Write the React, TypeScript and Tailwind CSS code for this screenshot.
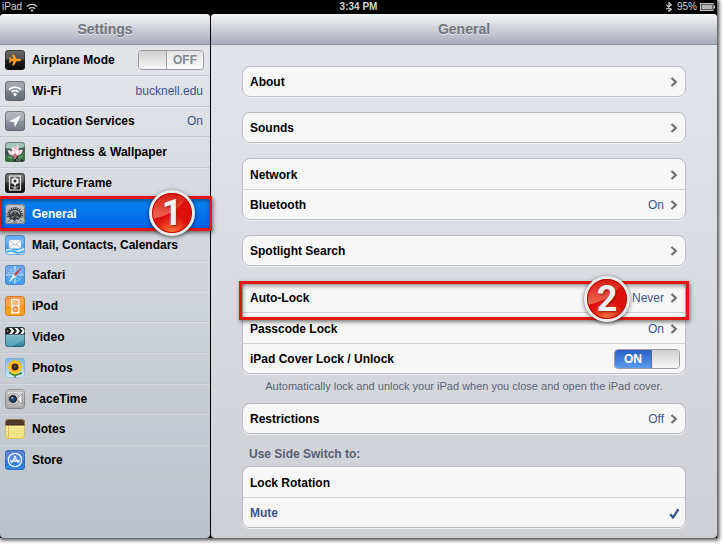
import React, { useState } from 'react';

/* ---------- sidebar icons, all on a 20 x 20 grid ---------- */

const Tile: React.FC<{ id: string; from: string; to: string; edge?: string; gloss?: boolean; children?: React.ReactNode }> = ({
  id, from, to, edge = '#555', gloss = true, children,
}) => (
  <svg viewBox="0 0 20 20" className="w-5 h-5 shrink-0" aria-hidden="true">
    <defs>
      <linearGradient id={`${id}-bg`} x1="0" y1="0" x2="0" y2="1">
        <stop offset="0" stopColor={from} />
        <stop offset="1" stopColor={to} />
      </linearGradient>
      <clipPath id={`${id}-clip`}>
        <rect width="20" height="20" rx="3.5" />
      </clipPath>
    </defs>
    <g clipPath={`url(#${id}-clip)`}>
      <rect width="20" height="20" fill={`url(#${id}-bg)`} />
      {gloss && <path d="M0 0h20v9q-10 3-20 0z" fill="#fff" opacity=".2" />}
      {children}
    </g>
    <rect x=".5" y=".5" width="19" height="19" rx="3" fill="none" stroke={edge} strokeOpacity=".6" />
  </svg>
);

const icons = {
  airplane: (
    <Tile id="air" from="#444" to="#050505" edge="#222">
      <path d="M16 10c0-.8-1-1.300-2.500-1.300h-1.900L8.800 4.500H7.100l1.300 4.200H6.500L5.200 7.200H4L4.600 10 4 12.800h1.200l1.300-1.500h1.900l-1.300 4.200h1.700l2.800-4.200h1.900C15 11.300 16 10.800 16 10z" fill="#ff9d23" />
    </Tile>
  ),
  wifi: (
    <Tile id="wifi" from="#8f959e" to="#646a74">
      <g fill="none" stroke="#fff" strokeWidth="1.8">
        <path d="M4 8.600a8.600 8.600 0 0 1 12 0" />
        <path d="M6.500 11.200a5 5 0 0 1 7 0" />
      </g>
      <path d="M10 15.600l-2.100-2.500a3 3 0 0 1 4.200 0z" fill="#fff" />
    </Tile>
  ),
  location: (
    <Tile id="loc" from="#a3a8b3" to="#747986">
      <path d="M15.800 4.200L4 10.600l5.200.5.7 5.200z" fill="#fff" />
    </Tile>
  ),
  wallpaper: (
    <Tile id="wall" from="#4f7f77" to="#1c2a26" gloss={false}>
      <path d="M0 0h20v5q-10 3-20 1z" fill="#a3c4b9" />
      <path d="M0 12l6 1 4 3-2 4H0zM20 9l-6 3-1 5 7 1z" fill="#397540" />
      <path d="M10 14C5 14 3 11 2.500 8c3 0 4 1 4.500 2C6 7 7 5 8 4c1 1 1.500 2 2 3 .4-2 1.500-3.500 3-4.500 1 2 1 4 .3 6.500C14 8 15.500 7.500 18 8c-1 4-4 6-8 6z" fill="#f6d3dd" />
      <path d="M10 14c-2-1-3-3-3-5 2 1 2.600 2 3 3 .4-2 1.200-3 3-4 .4 3-1 5-3 6z" fill="#fff" />
      <path d="M8 13l2-2 2 2-1 4H9z" fill="#d8607e" />
      <path d="M3 15l4 1M13 16l5-2M11 18l5 0" stroke="#a8c39c" strokeWidth=".8" />
    </Tile>
  ),
  frame: (
    <Tile id="frame" from="#555" to="#0c0c0c" edge="#222">
      <rect x="4.500" y="3" width="11" height="14" fill="none" stroke="#e8e8e8" strokeWidth="1.200" />
      <g fill="#f0f0f0">
        <circle cx="10" cy="5.700" r="1.500" /><circle cx="12.100" cy="6.900" r="1.500" />
        <circle cx="12.100" cy="9.300" r="1.500" /><circle cx="10" cy="10.500" r="1.500" />
        <circle cx="7.900" cy="9.300" r="1.500" /><circle cx="7.900" cy="6.900" r="1.500" />
      </g>
      <circle cx="10" cy="8.100" r="1.500" fill="#333" />
      <path d="M10 11.500v4M10 15c-2 0-3-.8-3.200-2M10 15c2 0 3-.8 3.200-2" fill="none" stroke="#eee" />
    </Tile>
  ),
  general: (
    <Tile id="gen" from="#b4b6b9" to="#85878a">
      <circle cx="10" cy="11" r="7" fill="none" stroke="#323437" strokeWidth="1.600" strokeDasharray="1.200 1" />
      <circle cx="10" cy="11" r="6.200" fill="#36383b" />
      <path d="M5.500 10.500a4.600 4.600 0 0 1 9 0" fill="none" stroke="#a0a2a5" strokeWidth="1.500" />
      <path d="M10 11V7.500M10 11.500l4 2.500M10 11.500L6 14" stroke="#8d8f92" strokeWidth="1.200" />
      <circle cx="10" cy="11.300" r="1.900" fill="#4b4d50" />
      <path d="M0 14l3.500-.5 2 2.500 2-1 2 2.500 2-2.500 2 1 2-2.500 4.500.5v6H0z" fill="#b4b6b9" />
      <path d="M3 17.500l2-1.500M17 17.500L15 16M8 18h4" stroke="#606265" />
    </Tile>
  ),
  mail: (
    <Tile id="mail" from="#4b9df0" to="#3aa6ef" edge="#3b7cc4">
      <path d="M0 15q4-2 8 0t12-3v8H0z" fill="#d5effc" />
      <path d="M1 17q5-2 9 0t9-1" stroke="#39a4e8" fill="none" strokeWidth="1.500" />
      <rect x="4" y="5" width="12" height="8.500" rx=".8" fill="#fff" stroke="#9fb3c8" strokeWidth=".4" />
      <path d="M4.500 5.500L10 10l5.500-4.500M4.500 13l4-4M15.500 13l-4-4" fill="none" stroke="#8499b0" strokeWidth=".7" />
    </Tile>
  ),
  safari: (
    <Tile id="saf" from="#4c8fe8" to="#45a4ee" edge="#3a76be">
      <circle cx="10" cy="10" r="6.500" fill="none" stroke="#cce5ff" strokeWidth="1" strokeDasharray="1 1" />
      <path d="M10 1v18M1 10h18" stroke="#dcefff" strokeWidth="1.200" strokeDasharray="2 .6" />
      <path d="M5 5l10 10" stroke="#a9d2fb" strokeWidth=".8" />
      <path d="M17 2.500l-8.200 6.300 2.200 2.200z" fill="#c44940" />
      <path d="M3.500 17.500l5.300-8.700L11 11z" fill="#f6f6f6" />
      <circle cx="10" cy="10" r=".8" fill="#555" />
    </Tile>
  ),
  ipod: (
    <Tile id="ipod" from="#f4801f" to="#fba81c" edge="#b9691c">
      <rect x="6" y="3" width="8.500" height="14.500" rx=".8" fill="#fff3e6" />
      <rect x="7.300" y="4.300" width="5.900" height="4.700" fill="#f9b67a" />
      <circle cx="10.250" cy="13.200" r="2.100" fill="none" stroke="#f4831f" strokeWidth="1.600" />
    </Tile>
  ),
  video: (
    <Tile id="vid" from="#c8e4ec" to="#257f9d" edge="#2c4c57" gloss={false}>
      <path d="M0 20V12L20 7v5L6 20z" fill="#6fb4c8" opacity=".6" />
      <rect width="20" height="7.500" fill="#1a1a1a" />
      <path d="M4 1h3l2.500 3L7 7H4l2.500-3zM9.500 1h3L15 4l-2.500 3h-3L12 4zM15 1h3l2.500 3L18 7h-3l2.500-3z" fill="#f4f4f4" />
      <circle cx="2.600" cy="4" r="1" fill="#888" />
    </Tile>
  ),
  photos: (
    <Tile id="pho" from="#7ab4ec" to="#d6ecfa" edge="#7fa6c9" gloss={false}>
      <path d="M10 11v9M10 17c-3 0-4-2-6-2.500M10 17c3 0 4-2 7-1.500" fill="none" stroke="#3c8428" strokeWidth="1.700" />
      <g fill="#fbc317">
        {[0, 30, 60, 90, 120, 150].map((a) => (
          <ellipse key={a} cx="10" cy="9" rx="2" ry="7.800" transform={`rotate(${a} 10 9)`} />
        ))}
      </g>
      <circle cx="10" cy="9" r="4" fill="#e5860f" />
      <circle cx="10" cy="9" r="3.200" fill="#39220f" />
      <circle cx="10" cy="8.500" r="1.300" fill="#6b5138" />
    </Tile>
  ),
  facetime: (
    <Tile id="face" from="#d6d6d6" to="#b4b4b4" edge="#666">
      <rect x="2" y="2" width="16" height="16" rx="2" fill="none" stroke="#8a8a8a" strokeWidth=".6" />
      <rect x="3.500" y="5" width="9.500" height="10" rx="2" fill="#e9e9e9" stroke="#777" strokeWidth=".6" />
      <path d="M17 5v10l-4-4V9z" fill="#f8f8f8" stroke="#777" strokeWidth=".6" />
      <circle cx="8" cy="10" r="4" fill="#24282f" />
      <circle cx="8" cy="10" r="2.600" fill="#1c4674" />
      <circle cx="7.200" cy="9" r="1.100" fill="#8cc2ee" />
    </Tile>
  ),
  notes: (
    <Tile id="note" from="#fbf3a0" to="#f7e87a" edge="#b5a558" gloss={false}>
      <path d="M0 9.500h20M0 12h20M0 14.500h20M0 17h20" stroke="#d9cf85" strokeWidth=".6" />
      <path d="M3.500 6v14" stroke="#d99f62" strokeWidth=".6" />
      <rect width="20" height="6" fill="#553a31" />
      <path d="M0 6h20" stroke="#362017" />
    </Tile>
  ),
  store: (
    <Tile id="store" from="#2c5cc8" to="#2f8be8" edge="#2f5fae">
      <circle cx="10" cy="10" r="6.700" fill="none" stroke="#f2f8ff" strokeWidth="1.300" />
      <g stroke="#f2f8ff" strokeWidth="1.300" strokeLinecap="round">
        <path d="M10.600 6.500L6.700 12.700M9.400 6.500l3.900 6.200M5.300 11h9.400" />
      </g>
    </Tile>
  ),
};

type IconName = keyof typeof icons;

const menu: { icon: IconName; label: string; value?: string }[] = [
  { icon: 'airplane', label: 'Airplane Mode' },
  { icon: 'wifi', label: 'Wi-Fi', value: 'bucknell.edu' },
  { icon: 'location', label: 'Location Services', value: 'On' },
  { icon: 'wallpaper', label: 'Brightness & Wallpaper' },
  { icon: 'frame', label: 'Picture Frame' },
  { icon: 'general', label: 'General' },
  { icon: 'mail', label: 'Mail, Contacts, Calendars' },
  { icon: 'safari', label: 'Safari' },
  { icon: 'ipod', label: 'iPod' },
  { icon: 'video', label: 'Video' },
  { icon: 'photos', label: 'Photos' },
  { icon: 'facetime', label: 'FaceTime' },
  { icon: 'notes', label: 'Notes' },
  { icon: 'store', label: 'Store' },
];

/* ---------- small parts ---------- */

const Chevron = () => (
  <svg viewBox="0 0 8 10" className="w-2 h-[10px] shrink-0" aria-hidden="true">
    <path d="M1.500 1L5.800 5 1.500 9" fill="none" stroke="#6f6f6f" strokeWidth="2.200" />
  </svg>
);

const Toggle: React.FC<{ id: string; on: boolean; onChange: (v: boolean) => void }> = ({ id, on, onChange }) => (
  <span className="relative flex w-[66px] h-5 rounded-sm border border-[#9a9b9e] overflow-hidden text-xs leading-[18px] text-center">
    <input
      id={id}
      type="checkbox"
      role="switch"
      checked={on}
      onChange={(e) => onChange(e.target.checked)}
      className="absolute inset-0 w-full h-full opacity-0 cursor-pointer"
    />
    {on && <span className="flex-1 bg-gradient-to-b from-[#2a5fc4] to-[#5b9bf0] font-bold text-white">ON</span>}
    <span className={`w-7 bg-gradient-to-b from-[#cfcfcf] to-[#f8f8f8] ${on ? 'border-l border-[#4a6ba8]' : 'border-r border-[#a2a2a2]'}`}></span>
    {!on && <span className="flex-1 bg-gradient-to-b from-[#e4e4e4] to-[#fbfbfb] font-bold text-[#85878b]">OFF</span>}
  </span>
);

const Card: React.FC<{ children: React.ReactNode }> = ({ children }) => (
  <div className="rounded-lg border border-[#b9bbc2] bg-[#f7f7f7] shadow-[0_1px_0_#f0f1f4] divide-y divide-[#cfd0d3]">
    {children}
  </div>
);

const LinkRow: React.FC<{ label: string; value?: string; children?: React.ReactNode }> = ({ label, value, children }) => (
  <a href="#" className="relative flex items-center h-[31px] last:h-[29px] pt-px px-[7px]">
    <span className="flex-1 font-bold text-black">{label}</span>
    {value && <span className="mr-[6px] text-[#3c5587]">{value}</span>}
    <Chevron />
    {children}
  </a>
);

// numbered red ball of a callout
const Ball: React.FC<{ n: number }> = ({ n }) => (
  <span className="relative flex shrink-0 items-center justify-center w-[46px] h-[46px] rounded-full border-[3px] border-[#ececec] bg-[#dc0f0c] overflow-hidden shadow-[0_1px_4px_rgba(0,0,0,0.6)]">
    <svg viewBox="0 0 40 40" className="absolute inset-0 w-full h-full" aria-hidden="true">
      <defs>
        <linearGradient id={`ball${n}`} x1="0" y1="0" x2="0" y2="1">
          <stop offset="0" stopColor="#d8190f" />
          <stop offset="1" stopColor="#ee6a57" />
        </linearGradient>
        <radialGradient id={`glow${n}`} cx=".5" cy="1" r=".45">
          <stop offset="0" stopColor="#ff7a3c" />
          <stop offset="1" stopColor="#ff7a3c" stopOpacity="0" />
        </radialGradient>
      </defs>
      <path d="M0 0h36C32 13 20 22 0 26z" fill={`url(#ball${n})`} />
      <circle cx="20" cy="20" r="20" fill={`url(#glow${n})`} />
      <circle cx="20" cy="20" r="19.500" fill="none" stroke="#b80b08" />
    </svg>
    <span className="relative font-[Roboto,sans-serif] text-4xl leading-none font-bold text-[#f0f0f0] [text-shadow:1px_1px_2px_rgba(80,0,0,0.6)]">{n}</span>
  </span>
);

const Title: React.FC<{ children: React.ReactNode }> = ({ children }) => (
  <h1 className="h-[31px] shrink-0 rounded-t border-b border-[#8b8f9d] bg-gradient-to-b from-[#f5f6f8] to-[#a9acba] text-center text-sm leading-[30px] font-bold text-[#71757e] [text-shadow:0_1px_0_rgba(255,255,255,0.5)]">
    {children}
  </h1>
);

const StatusBar = () => (
  <div className="grid grid-cols-3 items-center h-[14px] shrink-0 px-[2px] text-[10px] leading-[14px] text-[#d4d4d4]">
    <div className="flex items-center gap-1">
      <span>iPad</span>
      <svg viewBox="0 0 12 9" className="w-3 h-[9px]" aria-hidden="true">
        <g fill="none" stroke="#c9c9c9" strokeWidth="1.300">
          <path d="M.8 3.600a7.300 7.300 0 0 1 10.400 0" />
          <path d="M3 5.800a4.200 4.200 0 0 1 6 0" />
        </g>
        <path d="M6 9L4.400 7.300a2.200 2.200 0 0 1 3.200 0z" fill="#c9c9c9" />
      </svg>
    </div>
    <div className="text-center font-bold">3:34 PM</div>
    <div className="flex items-center justify-end">
      <svg viewBox="0 0 8 10" className="w-2 h-[10px] mr-1" aria-hidden="true">
        <path d="M1.300 2.800l5 4.400L4 9.300V.7l2.300 2.100-5 4.400" fill="none" stroke="#c9c9c9" strokeWidth="1.200" />
      </svg>
      <span className="mr-[3px]">95%</span>
      <svg viewBox="0 0 15 8" className="w-[15px] h-2" aria-hidden="true">
        <rect x=".5" y=".5" width="12.500" height="7" fill="none" stroke="#c9c9c9" />
        <rect x="1.500" y="1.500" width="10.500" height="5" fill="#b5b5b5" />
        <path d="M13.500 2.500H15v3h-1.500z" fill="#c9c9c9" />
      </svg>
    </div>
  </div>
);

const App: React.FC = () => {
  const [airplane, setAirplane] = useState(false);
  const [coverLock, setCoverLock] = useState(true);
  const [sideSwitch, setSideSwitch] = useState('Mute');

  return (
    <div className="flex min-h-screen bg-white pr-[6px] pb-[6px] text-xs font-['Liberation_Sans',Arial,sans-serif]">
      <div className="flex flex-col flex-1 bg-black shadow-[1px_1px_4px_1px_rgba(0,0,0,0.75)]">
        <StatusBar />

        <div className="flex flex-1">
          {/* Sidebar */}
          <nav className="flex flex-col w-[210px] shrink-0 mr-px rounded bg-gradient-to-b from-[#e5e7eb] to-[#bcc2cb]">
            <Title>Settings</Title>
            <ul className="grid h-[431px] auto-rows-fr">
              {menu.map(({ icon, label, value }) => {
                if (icon === 'airplane') {
                  return (
                    <li key={icon} className="flex items-center border-b border-[#c9ccd2] pl-[5px] pr-[6px]">
                      {icons[icon]}
                      <label htmlFor="airplane" className="flex-1 ml-[7px] font-bold">{label}</label>
                      <Toggle id="airplane" on={airplane} onChange={setAirplane} />
                    </li>
                  );
                }
                const active = icon === 'general';
                return (
                  <li
                    key={icon}
                    className={`relative border-b ${active ? 'border-[#0a50c8] bg-gradient-to-b from-[#0a86f2] to-[#0560e6]' : 'border-[#c3c7ce] shadow-[inset_0_1px_0_rgba(255,255,255,0.25)]'}`}
                  >
                    <a href="#" className="flex items-center h-full pl-[5px] pr-[7px]">
                      {icons[icon]}
                      <span className={`flex-1 ml-[7px] font-bold ${active ? 'text-white' : 'text-black'}`}>{label}</span>
                      {value && <span className="text-[#3c5587]">{value}</span>}
                    </a>
                    {active && (
                      <div className="absolute z-10 -inset-x-[2px] -top-[3px] -bottom-[2px] flex items-center justify-end pr-[14px] border-[3px] border-[#e3170f] shadow-[1px_2px_4px_rgba(0,0,0,0.5),inset_1px_2px_4px_rgba(0,0,0,0.4)] pointer-events-none">
                        <Ball n={1} />
                      </div>
                    )}
                  </li>
                );
              })}
            </ul>
          </nav>

          {/* General pane */}
          <main className="flex flex-col flex-1 rounded bg-gradient-to-b from-[#e2e6ec] to-[#cfd0d6]">
            <Title>General</Title>
            <div className="flex flex-col gap-[15px] px-[31px] pt-[21px] pb-[10px]">
              <Card><LinkRow label="About" /></Card>
              <Card><LinkRow label="Sounds" /></Card>
              <Card>
                <LinkRow label="Network" />
                <LinkRow label="Bluetooth" value="On" />
              </Card>
              <Card><LinkRow label="Spotlight Search" /></Card>

              <div>
                <Card>
                  <LinkRow label="Auto-Lock" value="Never">
                    <div className="absolute z-10 -inset-x-[4px] -top-[1px] -bottom-[8px] flex items-center justify-end pr-[56px] pb-[3px] border-[3px] border-[#e3170f] shadow-[1px_2px_4px_rgba(0,0,0,0.5),inset_1px_2px_4px_rgba(0,0,0,0.4)] pointer-events-none">
                      <Ball n={2} />
                    </div>
                  </LinkRow>
                  <LinkRow label="Passcode Lock" value="On" />
                  <div className="flex items-center h-[29px] pt-px pl-[7px] pr-[5px]">
                    <label htmlFor="cover" className="flex-1 font-bold">iPad Cover Lock / Unlock</label>
                    <Toggle id="cover" on={coverLock} onChange={setCoverLock} />
                  </div>
                </Card>
                <p className="mt-[5px] text-center text-[11px] leading-[14px] text-[#5b6478]">
                  Automatically lock and unlock your iPad when you close and open the iPad cover.
                </p>
              </div>

              <div className="-mt-[5px]">
                <Card><LinkRow label="Restrictions" value="Off" /></Card>
              </div>

              <fieldset>
                <legend className="pl-[7px] pb-[6px] leading-[11px] font-bold text-[#565f73]">Use Side Switch to:</legend>
                <Card>
                  {['Lock Rotation', 'Mute'].map((option) => (
                    <label key={option} className="relative flex items-center h-[31px] last:h-[29px] pt-px pl-[7px] pr-[5px] cursor-pointer">
                      <input
                        type="radio"
                        name="side-switch"
                        checked={sideSwitch === option}
                        onChange={() => setSideSwitch(option)}
                        className="absolute inset-0 opacity-0"
                      />
                      <span className={`flex-1 font-bold ${sideSwitch === option ? 'text-[#3c5587]' : 'text-black'}`}>{option}</span>
                      {sideSwitch === option && (
                        <svg viewBox="0 0 11 11" className="w-[11px] h-[11px]" aria-hidden="true">
                          <path d="M1.200 6.200L4 9.500 9.500 1.200" fill="none" stroke="#2f4f88" strokeWidth="2.200" />
                        </svg>
                      )}
                    </label>
                  ))}
                </Card>
              </fieldset>
            </div>
          </main>
        </div>
      </div>
    </div>
  );
};

export default App;
